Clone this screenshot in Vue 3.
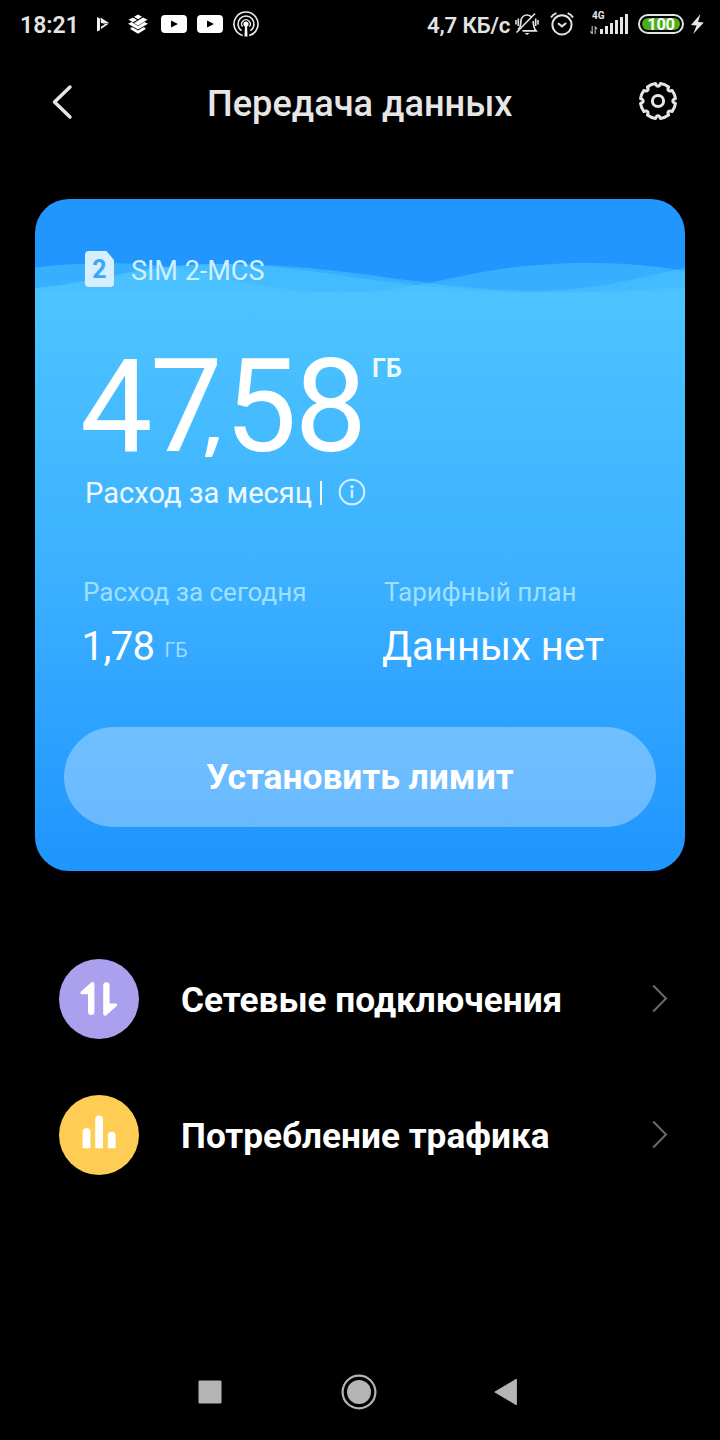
<script setup>
const polar = (r, deg) => {
  const a = (deg * Math.PI) / 180
  return `${(20 + r * Math.cos(a)).toFixed(2)} ${(20 + r * Math.sin(a)).toFixed(2)}`
}
// Eight rounded lobes separated by small notches
let gear = ''
for (let k = 0; k < 8; k++) {
  const a = k * 45
  gear += `${k ? 'L' : 'M'}${polar(17.6, a + 8)} A17.6 17.6 0 0 1 ${polar(17.6, a + 37)} L${polar(15.6, a + 39.5)} Q${polar(14, a + 45)} ${polar(15.6, a + 50.5)} `
}
gear += 'Z'

const bars = [5, 8, 11, 14, 17, 20]
const items = [
  { id: 'net', text: 'Сетевые подключения' },
  { id: 'usage', text: 'Потребление трафика' },
]
</script>

<template>
  <div class="screen">
    <div class="status">
      <span class="clock">18:21</span>
      <svg class="i-play" width="14" height="16" viewBox="0 0 14 16">
        <path d="M1 1 L4 2.5 V14 L1 15.5 Z M4.5 1.5 L13 7 L5 7 Z M5.5 7.6 H13 L5 13 V10.6 L9 8.6 Z" fill="#f4f4f4" />
      </svg>
      <svg class="i-stack" width="22" height="20" viewBox="0 0 22 20">
        <path d="M11 .5 L15 2.8 L11 5.2 L7 2.8Z M6 3.5 L10 5.9 L6 8.3 L1.5 5.8Z M16 3.5 L20.5 5.8 L11 11.4 L7 9 Z M1 9.8 L4.6 7.9 L11 12 L17.4 7.9 L21 9.8 L11 15.6Z M3.6 13.8 L5.6 13.3 L11 16.4 L16.4 13.3 L18.4 13.8 L18.4 15.2 L11 19.8 L3.6 15.2Z" fill="#fff" />
      </svg>
      <svg class="i-tube" width="26" height="18" viewBox="0 0 26 18">
        <rect width="26" height="18" rx="4" fill="#fff" /><path d="M10 5.5 L17 9 L10 12.5Z" fill="#000" />
      </svg>
      <svg class="i-tube second" width="26" height="18" viewBox="0 0 26 18">
        <rect width="26" height="18" rx="4" fill="#fff" /><path d="M10 5.5 L17 9 L10 12.5Z" fill="#000" />
      </svg>
      <svg class="i-cast" width="26" height="26" viewBox="0 0 26 26" fill="none" stroke="#eee" stroke-width="1.6">
        <path d="M9.8 24.6 A12 12 0 1 1 16.2 24.6" />
        <path d="M8.6 19.7 A8 8 0 1 1 17.4 19.7" />
        <path d="M9.6 15.7 A4.3 4.3 0 1 1 16.4 15.7" stroke-width="1.3" />
        <circle cx="13" cy="13" r="2.6" fill="#fff" stroke="none" />
        <path d="M12 14 L11.5 25.5 H14.5 L14 14Z" fill="#fff" stroke="none" />
      </svg>
      <span class="speed">4,7 КБ/с</span>
      <svg class="i-bell" width="24" height="24" viewBox="0 0 24 24" fill="none" stroke="#e4e4e4" stroke-width="1.7">
        <path d="M3 17.6 C6 15.5 5.6 13 5.8 9.5 C6.2 5.5 8.8 3 12 3 C14 3 15.7 4 16.8 5.6 M18.2 9 C18.3 13 18.5 16 21 18.8 H7.5" />
        <path d="M1.5 20.5 L20 1.5 M1 8 V12.5 M3.3 6.5 V14 M20.7 6.5 V14 M23 8 V12.5" stroke-width="1.6" />
        <path d="M9.5 21 H14.5 L12 23Z" fill="#e4e4e4" stroke="none" />
      </svg>
      <svg class="i-alarm" width="24" height="24" viewBox="0 0 24 24" fill="none" stroke="#e4e4e4" stroke-width="2">
        <circle cx="12" cy="12.8" r="9.6" />
        <path d="M1 5.6 C2.4 3.2 4 2 6.4 1.1 M23 5.6 C21.6 3.2 20 2 17.6 1.1" />
        <path d="M8 11.2 L12 14.4 L16.2 11" />
      </svg>
      <div class="signal">
        <span class="g4">4G</span>
        <div class="bars">
          <svg width="8" height="8" viewBox="0 0 8 8" fill="none" stroke="#bbb" stroke-width="1.1"><path d="M2.2 0 V7.5 L.3 5.5 M5.2 8 V1 L7.2 3" /></svg>
          <i v-for="h in bars" :key="h" :style="{ height: h + 'px' }"></i>
        </div>
      </div>
      <div class="battery"><div>100</div></div>
      <svg class="i-bolt" width="13" height="20" viewBox="0 0 13 20"><path d="M9.5 0 L0 11 L5.6 11.6 L2.2 20 L12.8 8.4 L7 7.9Z" fill="#e8e8e8" /></svg>
    </div>

    <header class="header">
      <svg width="24" height="40" viewBox="0 0 24 40"><path d="M20 5 L4.5 20 L20 35" fill="none" stroke="#e6e6e6" stroke-width="3.5" stroke-linecap="round" stroke-linejoin="round" /></svg>
      <h1>Передача данных</h1>
      <svg class="gear" width="40" height="40" viewBox="0 0 40 40" fill="none" stroke="#e6e6e6" stroke-width="3" stroke-linejoin="round">
        <path :d="gear" /><circle cx="20" cy="20" r="5.6" />
      </svg>
    </header>

    <section class="card">
      <svg class="waves" width="650" height="94" viewBox="0 0 650 94">
        <g fill="#55cdff" fill-opacity=".45">
          <path d="M0 89 C60 86 100 65 190 65 C310 65 400 92 500 92 C560 92 600 79 650 69 V94 H0Z" />
          <path d="M0 89 C60 83 110 65 180 65 C280 65 360 93.5 510 93.5 C570 93.5 610 91 650 88 V94 H0Z" />
          <path d="M0 68.5 C30 64.5 60 64 90 64.5 C170 66 210 93.5 305 93.5 C400 93.5 430 64 555 64 C590 64 625 67 650 72.5 V94 H0Z" />
        </g>
      </svg>

      <div class="sim">
        <svg width="29" height="36" viewBox="0 0 29 36">
          <path d="M4 0 H21.5 L29 9 V32 A4 4 0 0 1 25 36 H4 A4 4 0 0 1 0 32 V4 A4 4 0 0 1 4 0Z" fill="#d6efff" />
          <text x="14.5" y="27" text-anchor="middle" class="simno">2</text>
        </svg>
        <span>SIM 2-MCS</span>
      </div>

      <div class="total">
        <div class="num"><span>47</span><span class="comma">,</span><span>58</span></div>
        <span class="unit">ГБ</span>
      </div>

      <div class="month">
        <span>Расход за месяц</span><b></b>
        <svg width="28" height="28" viewBox="0 0 28 28"><circle cx="14" cy="14" r="12.3" fill="none" stroke="#d6f0ff" stroke-width="2" /><circle cx="14" cy="8.7" r="1.7" fill="#d6f0ff" /><path d="M14 12 V20" stroke="#d6f0ff" stroke-width="2.4" /></svg>
      </div>

      <div class="stats">
        <div class="stat">
          <label>Расход за сегодня</label>
          <p><span class="val used">1,78</span><small>ГБ</small></p>
        </div>
        <div class="stat plan">
          <label>Тарифный план</label>
          <p><span class="val">Данных нет</span></p>
        </div>
      </div>

      <button class="limit">Установить лимит</button>
    </section>

    <nav class="list">
      <div v-for="it in items" :key="it.id" class="item">
        <span class="badge" :class="it.id">
          <svg v-if="it.id === 'net'" width="40" height="36" viewBox="0 0 40 36" fill="#fff">
            <path d="M13.2 1.6 C14.6 .4 16.4 1.2 16.4 3.2 V30.8 A3.2 3.2 0 0 1 10 30.8 V13.2 H4 C2.4 13.2 1.8 11.6 3 10.4Z" />
            <path d="M25.2 4.4 A3.2 3.2 0 0 1 31.6 4.4 V22.4 H37.6 C39.2 22.4 39.6 24 38.4 25.2 L28.4 34.2 C27 35.4 25.2 34.6 25.2 32.6Z" />
          </svg>
          <svg v-else width="40" height="36" viewBox="0 0 40 36" fill="#fff">
            <path d="M3.6 34.3 V17 A4 4 0 0 1 11.4 17 V34.3Z M16.2 34.3 V5.4 A3.9 3.9 0 0 1 24 5.4 V34.3Z M28.8 34.3 V21.6 A3.9 3.9 0 0 1 36.6 21.6 V34.3Z" />
          </svg>
        </span>
        <span class="label">{{ it.text }}</span>
        <svg width="18" height="30" viewBox="0 0 18 30"><path d="M2.2 1.5 L15 14.5 L2.2 27.5" fill="none" stroke="#6a6a6a" stroke-width="2" /></svg>
      </div>
    </nav>

    <footer class="keys">
      <svg width="24" height="24" viewBox="0 0 24 24"><rect x=".5" y=".5" width="23" height="23" rx="1" fill="#b4b4b4" /></svg>
      <svg class="home" width="36" height="36" viewBox="0 0 36 36"><circle cx="18" cy="18" r="16.4" fill="none" stroke="#b4b4b4" stroke-width="2.2" /><circle cx="18" cy="18" r="12" fill="#b4b4b4" /></svg>
      <svg width="24" height="28" viewBox="0 0 24 28"><path d="M22.2 1.6 V26.4 L1.2 14Z" fill="#b4b4b4" stroke="#b4b4b4" stroke-width="1.4" stroke-linejoin="round" /></svg>
    </footer>
  </div>
</template>

<style>
body { background: #000; }
</style>
<style scoped>
* { box-sizing: border-box; margin: 0; padding: 0; }
svg { display: block; flex: none; }
.screen { width: 720px; height: 1440px; background: #000; color: #fff; font-family: Roboto, "Noto Sans", sans-serif; display: flex; flex-direction: column; overflow: hidden; }
.status { height: 48px; display: flex; align-items: center; padding-left: 20px; font-weight: 500; font-size: 23px; color: #e4e4e4; white-space: nowrap; }
.clock { width: 76px; line-height: 50px; padding-top: 3px; font-weight: 600; }
.i-stack { margin-left: 17px; }
.i-tube { margin-left: 12px; }
.i-tube.second { margin-left: 10px; }
.i-cast { margin-left: 10px; }
.speed { margin-left: 168px; width: 88px; line-height: 50px; padding-top: 2px; font-size: 22.2px; font-weight: 600; letter-spacing: -.15px; }
.i-alarm { margin-left: 11px; }
.signal { margin-left: 16px; width: 39px; height: 24px; padding-bottom: 2px; display: flex; flex-direction: column; justify-content: flex-end; position: relative; }
.g4 { position: absolute; left: 2px; top: -2px; font-size: 10px; line-height: 12px; font-weight: 700; }
.bars { display: flex; align-items: flex-end; gap: 1.6px; }
.bars i { width: 3.4px; background: #e4e4e4; }
.battery { margin-left: 9px; width: 46px; height: 20px; border: 2px solid #e4e4e4; border-radius: 10px; padding: 2px; }
.battery div { height: 12px; background: #4caf16; border-radius: 6px; font-size: 16.5px; line-height: 13px; font-weight: 700; color: #fff; text-align: center; letter-spacing: -.3px; }
.i-bolt { margin-left: 7px; }
.header { height: 151px; padding: 34px 42px 0 50px; display: flex; align-items: flex-start; justify-content: space-between; }
.header h1 { flex: 1; margin-left: 133px; font-size: 36.2px; font-weight: 500; line-height: 43px; color: #e6e6e6; white-space: nowrap; }
.header .gear { margin-top: -1px; }
.card { position: relative; width: 650px; height: 672px; margin: 0 35px; border-radius: 34px; overflow: hidden; background: linear-gradient(#2196ff 0 94px, #4dc4ff 94px, #3cb0ff 380px, #2196ff 650px); }
.waves { position: absolute; left: 0; top: 0; }
.sim { position: relative; margin: 52px 0 0 50px; height: 36px; display: flex; align-items: center; gap: 17px; font-size: 27px; color: #d0f0ff; }
.sim span { line-height: 36px; padding-top: 3px; }
.simno { font: 700 25px Roboto, sans-serif; fill: #3ba6f5; }
.total { position: relative; height: 130px; margin: 54px 0 0 45px; display: flex; align-items: flex-start; }
.num { display: flex; align-items: baseline; font-size: 129px; font-weight: 430; line-height: 131px; letter-spacing: -2.5px; width: 292px; white-space: nowrap; }
.comma { font: 600 82px/100px "Open Sans", sans-serif; letter-spacing: 0; margin-left: -18px; width: 22.5px; transform: translateY(-5px); }
.unit { font-size: 25px; font-weight: 700; line-height: 56px; color: #e8f9ff; }
.month { height: 40px; margin: 2px 0 0 50px; display: flex; align-items: center; font-size: 29.1px; line-height: 40px; color: #effaff; white-space: nowrap; }
.month span { width: 235px; }
.month b { width: 2px; height: 24px; background: #effaff; }
.month svg { margin: -3px 0 0 16px; }
.stats { display: grid; grid-template-columns: 301px 1fr; margin: 59px 0 0 48px; white-space: nowrap; }
.stat label { display: block; font-size: 26px; line-height: 40px; color: #a0e0ff; }
.stat p { display: flex; align-items: baseline; line-height: 66px; margin-top: 2px; }
.val { font-size: 40px; }
.used { letter-spacing: -.6px; margin-left: -1.5px; }
.plan .val { margin-left: -2px; }
.stat small { font-size: 19.5px; margin-left: 10px; color: #9fdcff; transform: translateY(-3px); }
.limit { display: block; margin: 40px 0 0 29px; width: 592px; height: 100px; border: 0; border-radius: 50px; background: rgba(255, 255, 255, .32); color: #fff; font: 700 35.3px/100px Roboto, sans-serif; }
.list { padding: 88px 51px 0 59px; display: flex; flex-direction: column; gap: 56px; }
.item { display: flex; align-items: center; height: 80px; }
.badge { width: 80px; height: 80px; border-radius: 50%; display: grid; place-items: center; }
.net { background: #aaa0ee; }
.net svg { margin-left: -2px; }
.usage { background: #ffcd53; }
.usage svg { margin-top: -6px; }
.label { flex: 1; margin-left: 42px; padding-top: 2px; font-size: 35.2px; font-weight: 700; line-height: 82px; white-space: nowrap; }
.keys { margin-top: auto; height: 96px; display: flex; align-items: center; justify-content: space-between; padding: 0 202px 0 198px; }
.home { margin-left: 2px; }
</style>
